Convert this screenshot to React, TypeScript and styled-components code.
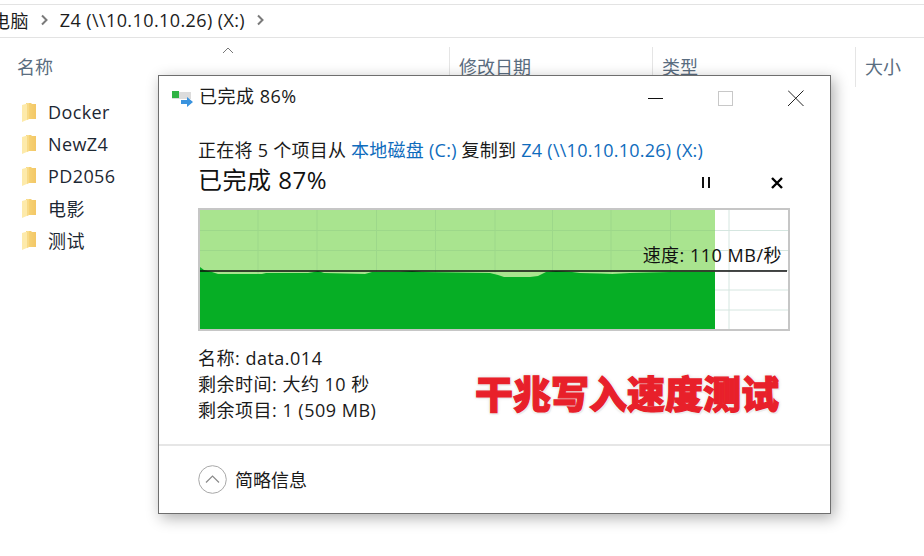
import React from "react";
import styled, { createGlobalStyle } from "styled-components";

const Global = createGlobalStyle`
  html, body { margin: 0; padding: 0; background: #fff; }
  body { font-family: "Open Sans", "Noto Sans CJK SC", sans-serif; }
`;

const Page = styled.div`
  position: relative;
  width: 924px;
  height: 556px;
  overflow: hidden;
  background: #fff;
  color: #1a1a1a;
`;

const Breadcrumb = styled.div`
  margin-top: 4px;
  height: 30px;
  padding-bottom: 2px;
  border-top: 1px solid #e3e3e3;
  border-bottom: 1px solid #e3e3e3;
  display: flex;
  align-items: center;
  gap: 12px;
  margin-left: -8px;
  font-size: 18px;
  letter-spacing: 0.4px;
  color: #1c1c1c;
`;

const Chevron = styled.svg`
  width: 7px;
  height: 12px;
  flex: none;
`;

const Columns = styled.div`
  display: grid;
  grid-template-columns: 449px 203px 203px 1fr;
  height: 40px;
  margin-top: 9px;
`;

const Column = styled.div<{ $first?: boolean }>`
  position: relative;
  display: flex;
  align-items: center;
  padding-left: ${(p) => (p.$first ? "17px" : "9px")};
  padding-bottom: 2px;
  box-sizing: border-box;
  font-size: 18px;
  color: #5a6d80;
  border-left: ${(p) => (p.$first ? "none" : "1px solid #e5e5e5")};
`;

const SortCaret = styled.svg`
  position: absolute;
  left: 222px;
  top: 0;
  width: 12px;
  height: 7px;
`;

const FileList = styled.ul`
  list-style: none;
  margin: 9px 0 0;
  padding: 0 0 0 21px;
`;

const FileRow = styled.li`
  height: 32px;
  display: flex;
  align-items: center;
  gap: 11px;
  font-size: 18px;
  letter-spacing: 0.4px;
  color: #1c2733;
`;

const FolderGlyph = styled.svg`
  width: 16px;
  height: 20px;
  flex: none;
`;

const Dialog = styled.div`
  position: absolute;
  left: 158px;
  top: 75px;
  width: 673px;
  height: 439px;
  box-sizing: border-box;
  background: #fff;
  border: 1px solid #6e6e6e;
  box-shadow: 3px 4px 14px rgba(0, 0, 0, 0.32);
  display: flex;
  flex-direction: column;
`;

const TitleBar = styled.div`
  height: 43px;
  flex: none;
  display: flex;
  align-items: center;
  padding: 0 26px 0 12px;
`;

const TitleIcon = styled.svg`
  width: 23px;
  height: 18px;
  flex: none;
  margin-right: 5px;
`;

const TitleText = styled.div`
  font-size: 18px;
  letter-spacing: 0.5px;
  line-height: 24px;
  padding-bottom: 3px;
  color: #1a1a1a;
  flex: 1;
`;

const WinButtons = styled.div`
  display: flex;
  align-items: center;
  gap: 54px;
`;

const WinIcon = styled.svg`
  width: 16px;
  height: 16px;
  display: block;
`;

const Body = styled.div`
  flex: 1;
  padding: 19px 40px 0 39px;
  display: flex;
  flex-direction: column;
`;

const CopyLine = styled.div`
  font-size: 18px;
  letter-spacing: 0.25px;
  line-height: 24px;
  height: 24px;
  color: #1a1a1a;
  white-space: nowrap;
`;

const LinkText = styled.span`
  color: #0f6cbd;
`;

const ProgressRow = styled.div`
  display: flex;
  align-items: center;
  height: 38px;
`;

const ProgressText = styled.div`
  font-size: 24px;
  letter-spacing: 0.5px;
  line-height: 32px;
  padding-bottom: 3px;
  color: #111;
  flex: 1;
  white-space: nowrap;
`;

const ControlIcon = styled.svg<{ $gap?: number }>`
  width: 14px;
  height: 14px;
  flex: none;
  margin-top: 4px;
  margin-right: ${(p) => p.$gap ?? 0}px;
`;

const ChartBox = styled.div`
  position: relative;
  width: 592px;
  height: 123px;
  margin-top: 8px;
  box-sizing: border-box;
  border: 2px solid #c6c6c6;
`;

const ChartSvg = styled.svg`
  display: block;
  width: 588px;
  height: 119px;
`;

const SpeedLabel = styled.div`
  position: absolute;
  right: 6px;
  top: 33px;
  font-size: 18px;
  letter-spacing: 0.5px;
  line-height: 24px;
  color: #111;
  white-space: nowrap;
`;

const DetailArea = styled.div`
  display: flex;
  justify-content: space-between;
  margin-top: 14px;
`;

const Details = styled.div`
  font-size: 18px;
  letter-spacing: 0.5px;
  line-height: 26px;
  color: #1a1a1a;
  white-space: nowrap;
`;

const Slogan = styled.div`
  margin: 25px 11px 0 0;
  font-family: "Noto Sans CJK SC", sans-serif;
  font-size: 38px;
  line-height: 44px;
  font-weight: 900;
  color: #e8202a;
  white-space: nowrap;
  -webkit-text-stroke: 1.2px #e8202a;
  text-shadow: 1.5px 1.5px 0 #ececec, -1.5px -1.5px 0 #f4f4f4, 1.5px -1.5px 0 #f4f4f4, -1.5px 1.5px 0 #f4f4f4, 0 0 4px #d4d4d4;
`;

const Footer = styled.div`
  height: 67px;
  flex: none;
  border-top: 2px solid #e6e6e6;
  display: flex;
  align-items: center;
  gap: 8px;
  padding-left: 39px;
`;

const ExpandIcon = styled.svg`
  width: 29px;
  height: 29px;
  flex: none;
`;

const FooterText = styled.div`
  font-size: 18px;
  padding-bottom: 2px;
  color: #1a1a1a;
`;

const files = ["Docker", "NewZ4", "PD2056", "电影", "测试"];

const Arrow = () => (
  <Chevron viewBox="0 0 7 12">
    <path d="M1 1.500 5.500 6 1 10.500" fill="none" stroke="#7a7a7a" strokeWidth="2" />
  </Chevron>
);

const Folder = () => (
  <FolderGlyph viewBox="0 0 16 20">
    <defs>
      <linearGradient id="folderBack" x1="0" x2="1" y1="0" y2="0">
        <stop offset="0" stopColor="#f7d67a" />
        <stop offset="1" stopColor="#f3c766" />
      </linearGradient>
    </defs>
    <path d="M5 1h5l1 1h4v15H5z" fill="url(#folderBack)" />
    <path d="M1 3l7-2v16l-7 3z" fill="#fdeaaa" />
    <path d="M8 1v16l-2 1V2z" fill="#f8da86" />
  </FolderGlyph>
);

const W = 588;
const H = 119;
const DONE = 515;
const vGrid = [58, 117, 176.5, 235.5, 295, 352.5, 411, 470.5, 529];
const hGrid = [20.5, 40.5, 60.5, 80, 100];
const topProfile =
  "M0 57 L4 60 L12 62 L18 64 L62 64 L66 63 L108 63 L114 62 L118 61 L124 63 L165 64 L172 62 L200 62 L212 61 L222 62 L290 63 L298 65 L304 67 L330 67 L338 66 L346 62 L356 61 L372 62 L380 63 L400 63.500 L412 64 L430 63 L470 62 L515 62";

export default function App() {
  return (
    <Page>
      <Global />
      <Breadcrumb>
        <span>电脑</span>
        <Arrow />
        <span>Z4 (\\10.10.10.26) (X:)</span>
        <Arrow />
      </Breadcrumb>
      <Columns>
        <Column $first>
          名称
          <SortCaret viewBox="0 0 12 7">
            <path d="M1 6 6 1l5 5" fill="none" stroke="#777" strokeWidth="1" />
          </SortCaret>
        </Column>
        <Column>修改日期</Column>
        <Column>类型</Column>
        <Column>大小</Column>
      </Columns>
      <FileList>
        {files.map((f) => (
          <FileRow key={f}>
            <Folder />
            {f}
          </FileRow>
        ))}
      </FileList>

      <Dialog>
        <TitleBar>
          <TitleIcon viewBox="0 0 23 18">
            <rect x="1" y="3" width="19" height="7" fill="#dcdcdc" />
            <rect x="1" y="2" width="7" height="7" fill="#2fb344" />
            <path d="M10 11h6V8l6 5-6 5v-3h-6z" fill="#3a93de" />
          </TitleIcon>
          <TitleText>已完成 86%</TitleText>
          <WinButtons>
            <WinIcon viewBox="0 0 16 16">
              <path d="M0 8.500h15" stroke="#111" strokeWidth="1" />
            </WinIcon>
            <WinIcon viewBox="0 0 16 16">
              <rect x="0.500" y="1.500" width="14" height="14" fill="none" stroke="#c8c8c8" />
            </WinIcon>
            <WinIcon viewBox="0 0 16 16">
              <path d="M0 0.500l15.500 15.500M15.500 0.500 0 16" stroke="#222" strokeWidth="1" />
            </WinIcon>
          </WinButtons>
        </TitleBar>
        <Body>
          <CopyLine>
            正在将 5 个项目从 <LinkText>本地磁盘 (C:)</LinkText> 复制到{" "}
            <LinkText>Z4 (\\10.10.10.26) (X:)</LinkText>
          </CopyLine>
          <ProgressRow>
            <ProgressText>已完成 87%</ProgressText>
            <ControlIcon $gap={57} viewBox="0 0 14 14">
              <path d="M4 1v11M10 1v11" stroke="#111" strokeWidth="2" />
            </ControlIcon>
            <ControlIcon $gap={6} viewBox="0 0 14 14">
              <path d="M2 2l10 10M12 2 2 12" stroke="#000" strokeWidth="2.400" />
            </ControlIcon>
          </ProgressRow>
          <ChartBox>
            <ChartSvg viewBox={`0 0 ${W} ${H}`}>
              {vGrid.map((x) => (
                <line key={x} x1={x} x2={x} y1={0} y2={H} stroke="#d5e6e0" />
              ))}
              {hGrid.map((y) => (
                <line key={y} x1={0} x2={W} y1={y} y2={y} stroke="#d5e6e0" />
              ))}
              <rect x="0" y="0" width={DONE} height={H} fill="#a9e48f" />
              {vGrid.filter((x) => x < DONE).map((x) => (
                <line key={x} x1={x} x2={x} y1={0} y2={H} stroke="#9dd88a" />
              ))}
              {hGrid.filter((y) => y < 60).map((y) => (
                <line key={y} x1={0} x2={DONE} y1={y} y2={y} stroke="#9dd88a" />
              ))}
              <path d={`${topProfile} L${DONE} ${H} L0 ${H} Z`} fill="#06ae25" />
              <line x1={0} x2={W - 1} y1={61} y2={61} stroke="#0c0c0c" strokeWidth="1.300" />
            </ChartSvg>
            <SpeedLabel>速度: 110 MB/秒</SpeedLabel>
          </ChartBox>
          <DetailArea>
            <Details>
              名称: data.014
              <br />
              剩余时间: 大约 10 秒
              <br />
              剩余项目: 1 (509 MB)
            </Details>
            <Slogan>干兆写入速度测试</Slogan>
          </DetailArea>
        </Body>
        <Footer>
          <ExpandIcon viewBox="0 0 29 29">
            <circle cx="14.500" cy="14.500" r="13.800" fill="none" stroke="#a8a8a8" />
            <path d="M8 17.500l6.500-6.500 6.500 6.500" fill="none" stroke="#8a8a8a" strokeWidth="1.200" />
          </ExpandIcon>
          <FooterText>简略信息</FooterText>
        </Footer>
      </Dialog>
    </Page>
  );
}
